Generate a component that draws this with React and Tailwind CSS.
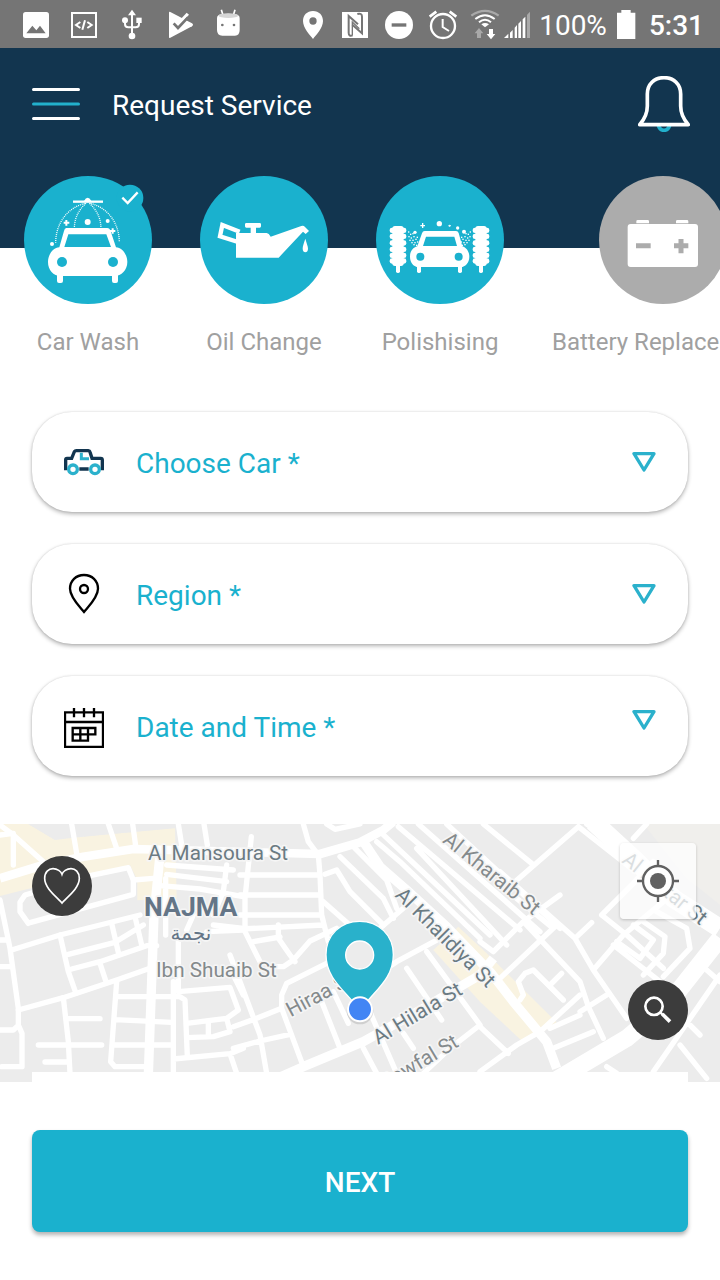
import React from "react";

function StatusBar() {
  return (
    <div className="flex h-12 items-center justify-between bg-[#757575] pl-3 pr-4 text-[28px] text-white">
      <div className="flex">
        <svg className="size-12" viewBox="36 0 144 144" fill="#fff">
          <rect x="69" y="36" width="78" height="78" rx="8" />
          <path d="M79 100 L97 77 L109 91 L120 77 L137 100Z" fill="#757575" />
        </svg>
        <svg className="size-12" viewBox="180 0 144 144" fill="none" stroke="#fff">
          <rect x="216" y="39" width="72" height="72" strokeWidth="6" />
          <path d="M241 66 L228 75 L241 84 M262 66 L275 75 L262 84 M255 61 L247 89" strokeWidth="6" />
        </svg>
        <svg className="size-12" viewBox="324 0 144 144" fill="#fff">
          <path d="M396 42V108 M375 64V72Q375 82 385 82H396 M417 64V72Q417 82 407 82H396" fill="none" stroke="#fff" strokeWidth="6" />
          <path d="M396 29L408 46H384Z" />
          <circle cx="375" cy="61" r="9" />
          <rect x="409" y="53" width="16" height="16" />
          <circle cx="396" cy="108" r="10" />
        </svg>
        <svg className="size-12" viewBox="468 0 144 144">
          <path d="M507 38Q507 34 511 36L576 70Q582 75 576 79L511 113Q507 115 507 111Z" fill="#fff" />
          <path d="M548 44L567 62" stroke="#757575" strokeWidth="4" />
          <path d="M534 66L560 38L567 44L534 80Z" fill="#fff" />
          <path d="M521 70L534 84L564 52" fill="none" stroke="#757575" strokeWidth="8" />
        </svg>
        <svg className="size-12" viewBox="612 0 144 144">
          <path d="M664 29L669 46M705 29L700 46" stroke="#fff" strokeWidth="5" />
          <path d="M651 55Q651 44 665 43Q685 39 705 43Q719 44 719 55V90Q719 107 705 107H667Q651 107 651 90Z" fill="#fff" />
          <ellipse cx="685" cy="47" rx="29" ry="7" fill="#d6d6d6" />
          <circle cx="667" cy="75" r="4" fill="#757575" />
          <circle cx="702" cy="75" r="4" fill="#757575" />
        </svg>
      </div>
      <div className="flex items-center">
        <svg className="h-12 w-11" viewBox="873 0 132 144">
          <path d="M939 33C921 33 909 46 909 63C909 84 930 105 939 117C948 105 969 84 969 63C969 46 957 33 939 33Z" fill="#fff" />
          <circle cx="939" cy="63" r="11" fill="#757575" />
        </svg>
        <svg className="h-12 w-11" viewBox="1005 0 132 144">
          <rect x="1026" y="36" width="78" height="78" fill="#fff" />
          <path d="M1058 106Q1046 110 1046 98V48L1074 73M1072 42Q1086 38 1086 50V100L1057 74" fill="none" stroke="#757575" strokeWidth="6" />
          <path d="M1057 106V66L1078 86" fill="none" stroke="#757575" strokeWidth="4" />
        </svg>
        <svg className="h-12 w-11" viewBox="57 0 132 144">
          <circle cx="117" cy="75" r="42" fill="#fff" />
          <rect x="95" y="70" width="44" height="10" fill="#757575" />
        </svg>
        <svg className="h-12 w-11" viewBox="189 0 132 144" fill="none" stroke="#fff">
          <circle cx="249" cy="78" r="36" strokeWidth="7" />
          <path d="M248 57V81L267 93" strokeWidth="6" />
          <path d="M209 50L229 35M289 50L269 35" strokeWidth="8" />
        </svg>
        <svg className="h-12 w-9" viewBox="324 0 108 144" fill="none">
          <path d="M337 47Q378 18 419 47" stroke="#a9a9a9" strokeWidth="7" />
          <path d="M349 57Q378 34 407 57M360 67Q378 52 396 67" stroke="#fff" strokeWidth="6" />
          <path d="M367 73Q378 65 390 73L378 82Z" fill="#fff" />
          <path d="M360 84L373 100H366V114H354V100H347Z" fill="#a9a9a9" />
          <path d="M396 118L383 102H390V87H402V102H409Z" fill="#fff" />
        </svg>
        <svg className="h-12 w-8" viewBox="432 0 96 144">
          <path d="M435 114L448 101V114ZM453 98L461 90V114H453ZM467 83L474 75V114H467ZM478 71L486 63V114H478ZM491 58L499 50V114H491Z" fill="#fff" />
          <path d="M504 44L513 35V114H504Z" fill="#a9a9a9" />
        </svg>
        <span className="pl-1 pr-2.5 pt-1">100%</span>
        <svg className="h-12 w-5" viewBox="770 0 60 144">
          <path d="M768 38H783V30H811V38H825V117H768Z" fill="#fff" />
        </svg>
        <span className="pl-3 pt-1 font-medium">5:31</span>
      </div>
    </div>
  );
}

function CarWashIcon() {
  return (
    <svg className="size-32" viewBox="72 48 384 384" aria-hidden="true">
      <circle cx="264" cy="240" r="192" fill="#1ab1ce" />
      <circle cx="390" cy="114" r="40" fill="#1ab1ce" />
      <path d="M367 113L383 129L413 97" fill="none" stroke="#fff" strokeWidth="7" />
      <path d="M219 125H309" stroke="#fff" strokeWidth="7" />
      <path d="M252 123Q263 104 274 123Z" fill="#fff" />
      <path d="M254 130C200 145 168 190 167 248M258 130C236 150 224 172 223 204M268 130C290 150 302 172 303 204M272 130C326 145 357 190 358 246" fill="none" stroke="#fff" strokeWidth="4" strokeDasharray="3 3" />
      <circle cx="263" cy="186" r="9" fill="#fff" />
      <circle cx="323" cy="183" r="6" fill="#fff" />
      <circle cx="156" cy="252" r="6" fill="#fff" />
      <path d="M191 188H208M199 180V197M329 213H346M338 205V221" stroke="#fff" strokeWidth="6" />
      <path fillRule="evenodd" fill="#fff" d="M199 204H322Q328 204 331 211L348 262C366 263 382 283 382 306C382 330 364 348 344 348H182C160 348 144 330 144 306C144 283 160 263 178 262L192 213Q194 204 199 204ZM205 223L193 261H333L319 223Z" />
      <path d="M171 340H189V363Q189 369 183 369H177Q171 369 171 363ZM336 340H354V363Q354 369 348 369H342Q336 369 336 363Z" fill="#fff" />
      <circle cx="186" cy="306" r="15" fill="#1ab1ce" />
      <circle cx="339" cy="306" r="15" fill="#1ab1ce" />
    </svg>
  );
}

function OilIcon() {
  return (
    <svg className="size-32" viewBox="600 48 384 384" aria-hidden="true">
      <circle cx="792" cy="240" r="192" fill="#1ab1ce" />
      <path d="M708 219H752V203H739Q735 203 735 199V193Q735 189 739 189H779Q783 189 783 193V199Q783 203 779 203H768V219H800Q807 220 812 230L904 198Q911 196 915 201L927 213L917 222L909 215L836 293H708Z" fill="#fff" />
      <path d="M719 215L667 195L660 229L714 246" fill="none" stroke="#fff" strokeWidth="13" />
      <path d="M916 236C911 250 908 259 908 266C908 280 924 280 924 266C924 259 920 250 916 236Z" fill="#fff" />
    </svg>
  );
}

const BRUSH_ROWS = [211, 229, 249, 268, 286, 303];
const MIST = [
  [144, 214], [150, 221], [157, 219], [145, 228], [152, 232], [160, 228], [148, 239], [157, 239],
  [166, 236], [154, 246], [163, 246], [171, 244], [160, 252], [168, 254], [170, 230],
];

function PolishIcon() {
  return (
    <svg className="size-32" viewBox="48 48 384 384" aria-hidden="true">
      <circle cx="240" cy="240" r="192" fill="#1ab1ce" />
      <g fill="#fff">
        {[114, 363].map((x) => (
          <g key={x}>
            <rect x={x - 17} y="198" width="34" height="120" rx="8" />
            <rect x={x - 6} y="305" width="12" height="34" rx="5" />
            {BRUSH_ROWS.map((y) => (
              <rect key={y} x={x - 25} y={y - 8} width="50" height="16" rx="7" />
            ))}
          </g>
        ))}
        {MIST.map(([x, y]) => (
          <g key={x + "-" + y}>
            <rect x={x} y={y} width="4" height="4" />
            <rect x={473 - x} y={y} width="4" height="4" />
          </g>
        ))}
        <circle cx="238" cy="191" r="8" />
        <circle cx="165" cy="217" r="5" />
        <circle cx="293" cy="204" r="5" />
        <circle cx="312" cy="215" r="6" />
        <path d="M181 195H186V189H190V195H195V199H190V204H186V199H181ZM265 196H268V194H270V196H273V199H270V201H268V199H265Z" />
        <path fillRule="evenodd" d="M194 213H288Q294 213 296 219L307 259C318 262 328 274 328 290C328 309 315 321 303 321H175C162 321 150 309 150 290C150 273 160 262 172 259L186 220Q188 213 194 213ZM198 230L189 258H291L283 230Z" />
        <rect x="171" y="312" width="12" height="27" rx="5" />
        <rect x="294" y="312" width="12" height="27" rx="5" />
      </g>
      <circle cx="181" cy="290" r="12" fill="#1ab1ce" />
      <circle cx="296" cy="290" r="12" fill="#1ab1ce" />
    </svg>
  );
}

function BatteryIcon() {
  return (
    <svg className="size-32" viewBox="720 48 384 384" aria-hidden="true">
      <circle cx="912" cy="240" r="192" fill="#acacac" />
      <path d="M832 190V184Q832 180 836 180H866Q870 180 870 184V190ZM951 190V184Q951 180 955 180H984Q988 180 988 184V190Z" fill="#fff" />
      <rect x="806" y="192" width="211" height="129" rx="9" fill="#fff" />
      <path d="M831 257H875M945 257H988M966 237V280" stroke="#acacac" strokeWidth="15" />
    </svg>
  );
}

const SERVICES = [
  { name: "Car Wash", Icon: CarWashIcon },
  { name: "Oil Change", Icon: OilIcon },
  { name: "Polishising", Icon: PolishIcon },
  { name: "Battery Replacement", Icon: BatteryIcon },
];

function CarGlyph() {
  return (
    <svg className="h-11 w-10" viewBox="132 120 120 132" fill="none" aria-hidden="true">
      <path d="M142 206H137V179Q137 175 141 175H155L163 155Q165 152 169 152H205Q209 152 210 156L216 175H242Q247 175 247 180V206H242M178 207H206" stroke="#12354f" strokeWidth="10" />
      <path d="M184 158V176H207" stroke="#2bb1cc" strokeWidth="9" />
      <circle cx="159" cy="208" r="13" stroke="#2bb1cc" strokeWidth="10" />
      <circle cx="225" cy="208" r="13" stroke="#2bb1cc" strokeWidth="10" />
    </svg>
  );
}

function PinGlyph() {
  return (
    <svg className="h-11 w-10" viewBox="132 516 120 132" fill="none" stroke="#000" strokeWidth="7" aria-hidden="true">
      <path d="M192 636C180 621 150 592 150 566C150 542 168 525 192 525C216 525 234 542 234 566C234 592 204 621 192 636Z" />
      <circle cx="192" cy="567" r="12" />
    </svg>
  );
}

function CalendarGlyph() {
  return (
    <svg className="h-11 w-10" viewBox="132 912 120 132" fill="none" stroke="#000" strokeWidth="7" aria-hidden="true">
      <path d="M135 937H249V1041H135ZM135 966H249M162 924V952M192 924V952M222 924V952" />
      <path d="M158 984H226V1003H158ZM158 1003V1022H204V984M181 984V1022" />
    </svg>
  );
}

function SelectCard({ id, label, Glyph, raised }) {
  return (
    <div className="flex h-[100px] items-center gap-8 rounded-[40px] bg-white px-8 shadow-[0_2px_4px_rgba(0,0,0,0.3),0_0_2px_rgba(0,0,0,0.12)]">
      <Glyph />
      <select
        id={id}
        aria-label={label}
        className="min-w-0 flex-1 appearance-none bg-transparent pt-1 text-[28px] leading-10 text-[#1ab1ce] outline-none"
      >
        <option>{label}</option>
      </select>
      <svg className={raised ? "pointer-events-none mb-3 size-6" : "pointer-events-none size-6"} viewBox="216 150 72 72" aria-hidden="true">
        <path d="M222 161H282L252 210Z" fill="none" stroke="#2bb1cc" strokeWidth="10" strokeLinejoin="round" />
      </svg>
    </div>
  );
}

function StreetMap() {
  return (
    <svg className="h-full w-full" viewBox="0 27 2160 774" preserveAspectRatio="xMidYMid slice" role="img" aria-label="Street map of Najma">
      <rect y="27" width="2160" height="774" fill="#ececec" />
      <g fill="#f9f3e1">
        <path d="M0 27H85L165 75L220 68L525 38L530 250L412 256V195L388 150L250 180L0 243Z" />
        <path d="M1375 335L1460 415L1670 622L1630 650L1570 682L1440 560L1300 405Z" />
      </g>
      <path d="M85 27H212L222 60L165 74ZM235 27H525V40L230 66Z" fill="#ececec" />
      <path d="M65 243L390 150L408 190V240L90 330L60 290Z" fill="#ececec" />
      <path d="M1930 27H2160V270L2060 190Z" fill="#f0efec" />
      <g fill="none" stroke="#fff" strokeWidth="16" strokeLinejoin="round" strokeLinecap="round">
        <path d="M0 30L40 60L130 140M0 60L40 55V150M215 27L230 115M325 27L350 100M398 27L408 100M535 27L545 90M612 27L622 90" />
        <path d="M0 255L30 400L55 580V630L66 655V755H5M0 645H40L54 632M0 375H20M0 455H28" />
        <path d="M35 405L180 360L420 300M55 585L190 548L350 495L450 460M90 323L400 238V195L385 158L270 182L75 240L60 262V290L85 325" />
        <path d="M400 195L460 190M180 360L205 470L228 535M205 418L345 382L430 330M215 462L300 440L440 392L470 392M335 325L355 412M405 305L425 390M300 445L318 500" />
        <path d="M350 500L332 740L345 755H440M190 548L205 680L210 775M205 611H300M115 690H305M135 741H205M350 545H540L555 555L562 725M345 614L515 622M340 690H515" />
        <path d="M520 500V775M497 190V360M535 370V530L690 517L715 585L680 610L560 625M680 610L690 650L640 665L560 668M625 620V660M520 732L690 716L730 700M690 716L710 775M500 150L700 165M500 178L680 200M480 212L600 222L730 245M560 345L580 300M640 330L730 340M680 150L670 230L640 300M620 350L730 345M700 480L730 540" />
        <path d="M754 65L735 250V350L780 440M720 180H960M720 240H960M720 300H965M720 342L970 330M835 330V370L870 420L885 440M760 380L840 366M1010 340L930 378L880 435L850 455H810M910 27L925 80L955 120L960 180L965 300L985 380M980 27L1005 43L1080 27" />
        <path d="M975 178L1010 165L1050 230L1150 330M970 260L1060 340M1020 125L1150 250L1180 310M1060 95L1160 195L1190 280M1130 80L1200 140L1440 370" />
        <path d="M1140 50L1470 360M1195 35L1560 345M1255 27L1620 350M1340 27L1680 340M1250 100L1520 390" />
        <path d="M1010 430L860 505L845 540V580L770 610L700 635M690 420L780 660L800 775M700 700L780 678L870 658M845 580L910 755M965 560L1020 700M1000 530L1045 625M1090 545L1190 775M1210 655L1240 700M1220 460L1325 615M1280 410L1440 630L1350 700L1270 775M1090 700L1130 775M1100 500L1190 440L1320 370M1210 280L1140 340" />
        <path d="M1450 27L1595 145M1545 200L1735 35M1735 35L1900 165M1760 27L1880 110M1940 27L1900 70M1500 170L1680 330L1725 370L1780 465L1880 610M1440 380L1480 410L1570 320L1680 240M1570 320L1740 500L1765 575L1810 670M1500 490L1670 330M1550 250L1660 340M1725 370L1775 323M1780 465L1870 360L1990 260M1805 300L1880 360L1990 460M1805 300L1900 205L1960 140" />
        <path d="M1560 555L1570 540L1555 500L1575 475L1600 465L1690 555M1650 510L1685 475M1740 540L1620 650L1550 690L1440 770M1440 635L1525 715M1740 590L1820 540M1660 700L1780 650M1740 600L1650 640M1850 380L1920 430L1960 375L1900 330M1930 320L1995 365L1990 415L1930 480M1970 290L2060 340L2070 400L1990 485M1840 390L1980 500M2160 480L1960 770M2120 465L2160 500M2040 690L2120 790M2100 660L2040 600M1820 755L1850 775" />
      </g>
      <g fill="none" stroke="#fff" strokeLinejoin="round">
        <path d="M0 190L130 150L250 125L400 102L960 117L1080 82L1150 45L1180 20" strokeWidth="26" />
        <path d="M480 120L462 300L445 780" strokeWidth="28" />
        <path d="M1090 80L1140 155L1220 225L1340 335L1470 470L1540 560L1640 680L1670 760" strokeWidth="28" />
        <path d="M820 795L910 755L1090 680L1270 580L1440 480L1480 430" strokeWidth="28" />
        <path d="M1780 20L1900 130L2020 250L2160 340" strokeWidth="56" />
        <path d="M1660 800L1880 670L2010 560L2160 370" strokeWidth="52" />
      </g>
      <g fontFamily="Roboto, sans-serif" fontSize="62" fill="#6b7b83" stroke="#f5f5f5" strokeWidth="10" strokeLinejoin="round" paintOrder="stroke">
        <text x="444" y="136">Al Mansoura St</text>
        <text x="432" y="303" fontSize="80" fontWeight="700" fill="#647587">NAJMA</text>
        <text x="573" y="374" fontSize="60" fontFamily="DejaVu Sans, sans-serif" textAnchor="middle" fill="#647587">نجمة</text>
        <text x="468" y="487" fill="#848a8c">Ibn Shuaib St</text>
        <text transform="translate(1325 80) rotate(39)" fill="#848a8c">Al Kharaib St</text>
        <text transform="translate(1183 243) rotate(45)">Al Khalidiya St</text>
        <text transform="translate(872 607) rotate(-28)" fill="#848a8c">Hiraa St</text>
        <text transform="translate(1134 690) rotate(-31)">Al Hilala St</text>
        <text transform="translate(1150 830) rotate(-31)" fill="#848a8c">Nawfal St</text>
        <text transform="translate(1863 140) rotate(39)">Al Matar St</text>
      </g>
      <path d="M1080 590C1050 535 978 500 978 419C978 360 1022 319 1079 319C1136 319 1180 360 1180 419C1180 500 1110 535 1080 590Z" fill="#29b1cb" stroke="#fff" strokeWidth="4" />
      <circle cx="1079" cy="420" r="42" fill="#ececec" stroke="#fff" strokeWidth="4" />
      <circle cx="1080" cy="588" r="40" fill="#000" opacity="0.12" />
      <circle cx="1080" cy="583" r="36" fill="#4285f4" stroke="#fff" strokeWidth="6" />
    </svg>
  );
}

export default function App() {
  return (
    <div className="min-h-screen overflow-hidden bg-white pb-12 font-[Roboto,sans-serif]">
      <StatusBar />
      <header className="h-[200px] bg-[#12354f] pl-8 pr-[30px] pt-7">
        <div className="flex h-14 items-center">
          <button type="button" aria-label="Menu" className="h-8 w-12">
            <svg className="h-8 w-12" viewBox="0 0 48 32" strokeWidth="3" strokeLinecap="round">
              <path d="M1.5 1.5H46.5M1.5 30.5H46.5" stroke="#fff" />
              <path d="M1.5 16H46.5" stroke="#22b0cc" />
            </svg>
          </button>
          <h1 className="flex-1 pl-8 pt-1 text-[28px] text-white">Request Service</h1>
          <button type="button" aria-label="Notifications" className="h-14 w-[52px]">
            <svg className="h-14 w-[52px]" viewBox="834 228 156 168" fill="none">
              <path d="M895 376Q899 391 912 391Q925 391 929 376" stroke="#22b0cc" strokeWidth="11" />
              <path d="M839 374C854 357 862 340 862 318V282C862 253 882 233 912 233C942 233 962 253 962 282V318C962 340 970 357 985 374Z" stroke="#fff" strokeWidth="11" strokeLinejoin="round" />
            </svg>
          </button>
        </div>
      </header>

      <nav aria-label="Services" className="-mt-[72px] flex gap-12 overflow-hidden pl-6">
        {SERVICES.map(({ name, Icon }) => (
          <button key={name} type="button" className="flex min-w-32 shrink-0 flex-col items-center gap-6 text-2xl leading-7 text-[#a0a0a0]">
            <Icon />
            <span className="whitespace-nowrap">{name}</span>
          </button>
        ))}
      </nav>

      <main>
        <div className="flex flex-col gap-8 px-8 pt-14">
          <SelectCard id="car" label="Choose Car *" Glyph={CarGlyph} />
          <SelectCard id="region" label="Region *" Glyph={PinGlyph} />
          <SelectCard id="date" label="Date and Time *" Glyph={CalendarGlyph} raised />
        </div>

        <section className="relative mt-12 h-[258px] overflow-hidden">
          <StreetMap />
          <button type="button" aria-label="Favourite" className="absolute left-8 top-8 size-[60px]">
            <svg className="size-[60px]" viewBox="96 123 180 180">
              <circle cx="186" cy="213" r="90" fill="#3c3c3c" />
              <path d="M186 264C175 249 134 222 134 190C134 171 146 161 159 161C172 161 183 169 186 178C189 169 200 161 213 161C226 161 238 171 238 190C238 222 197 249 186 264Z" fill="none" stroke="#fff" strokeWidth="5" />
            </svg>
          </button>
          <button type="button" aria-label="My location" className="absolute right-6 top-[19px] size-[76px] rounded bg-white/75 shadow-[0_1px_3px_rgba(0,0,0,0.2)]">
            <svg className="size-[76px]" viewBox="420 84 228 228" fill="none" stroke="#616161">
              <circle cx="534" cy="198" r="45" fill="#fff" strokeWidth="7" />
              <path d="M471 198H492M576 198H597M534 135V156M534 240V261" strokeWidth="7" />
              <circle cx="534" cy="198" r="24" fill="#616161" stroke="none" />
            </svg>
          </button>
          <button type="button" aria-label="Search" className="absolute right-8 top-[156px] size-[60px]">
            <svg className="size-[60px]" viewBox="444 495 180 180" fill="none" stroke="#fff">
              <circle cx="534" cy="585" r="90" fill="#3c3c3c" stroke="none" />
              <circle cx="522" cy="574" r="26" strokeWidth="8" />
              <path d="M541 592L550 601" strokeWidth="7" />
              <path d="M547 597L570 620" strokeWidth="11" />
            </svg>
          </button>
          <div className="absolute bottom-0 left-8 right-8 h-2.5 bg-white" />
        </section>

        <div className="px-8 pt-12">
          <button type="button" className="h-[102px] w-full rounded-lg bg-[#1ab1ce] pt-1 text-[28px] font-medium text-white shadow-[0_3px_4px_rgba(0,0,0,0.3)]">
            NEXT
          </button>
        </div>
      </main>
    </div>
  );
}
